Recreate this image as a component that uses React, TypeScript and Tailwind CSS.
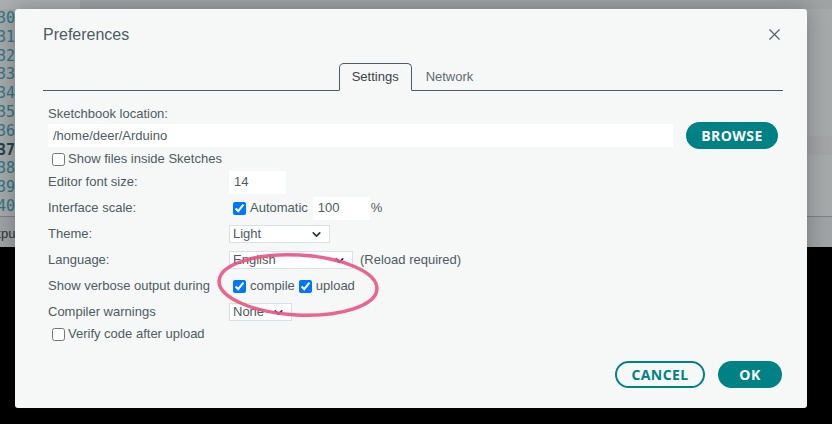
import { ChevronDown, X } from "lucide-react"

const lineNumbers = ["30", "31", "32", "33", "34", "35", "36", "37", "38", "39", "40"]

function Select({ value, width }: { value: string; width: string }) {
  return (
    <div
      className={`${width} h-[18px] flex items-center justify-between bg-white border border-[#dadfe1] pl-[3px] pr-[6px] text-[13px] text-[#4e5b61]`}
    >
      <span>{value}</span>
      <ChevronDown className="h-[13px] w-[13px] text-[#2c353a]" strokeWidth={3.2} />
    </div>
  )
}

function Row({ label, children }: { label: string; children: React.ReactNode }) {
  return (
    <div className="h-[26px] flex items-center">
      <div className="w-[181px] shrink-0">{label}</div>
      <div className="flex items-center">{children}</div>
    </div>
  )
}

export default function App() {
  return (
    <div className="relative w-[832px] h-[424px] overflow-hidden bg-black font-['Liberation_Sans',Arial,sans-serif]">
      {/* dimmed IDE behind the dialog */}
      <div className="h-[247px] flex flex-col bg-[#a6a9aa]">
        <div className="h-[9px] flex">
          <div className="w-[80px] bg-[#adb0b0]" />
          <div className="flex-1 bg-[#9fa3a4]" />
        </div>
        <div className="h-[207px] flex">
          <div className="w-[30px] flex flex-col font-['DejaVu_Sans_Mono',monospace] text-[15px] leading-[18.8px] text-[#2f7487] -ml-[3px]">
            {lineNumbers.map((n) => (
              <div key={n} className={n === "37" ? "font-bold text-[#24424c]" : ""}>
                {n}
              </div>
            ))}
          </div>
          <div className="flex-1 flex flex-col">
            <div className="h-[127px]" />
            <div className="h-[19px] bg-[#a2a4a5]" />
          </div>
        </div>
        <div className="h-[1px] bg-[#7e8284]" />
        <div className="flex-1 bg-[#9fa3a5] pt-[7px] text-[13px] text-[#2c3538]">
          <span className="-ml-[20px] inline-block">Outpu</span>
        </div>
      </div>

      {/* Preferences dialog */}
      <div className="absolute left-[15px] top-[9px] w-[792px] h-[399px] rounded-[3px] bg-[#f6f8f8] shadow-[0_0_22px_rgba(0,0,0,0.28)] flex flex-col text-[13px] text-[#4e5b61]">
        <div className="h-[51px] flex items-center justify-between pl-[28px] pr-[23px]">
          <div className="text-[16px] text-[#4e5b61]">Preferences</div>
          <X className="h-[19px] w-[19px] text-[#4e5b61]" strokeWidth={1.4} />
        </div>

        <div className="mx-[28px] mr-[24px] h-[31px] flex items-end justify-center border-b border-[#4e5b61]">
          <div className="h-[28px] -mb-px px-[12px] flex items-center border border-[#4e5b61] border-b-[#f6f8f8] rounded-t-[5px] bg-[#f6f8f8] text-[#3a4449]">
            Settings
          </div>
          <div className="h-[27px] px-[14px] flex items-center text-[#5f6b71]">Network</div>
        </div>

        <div className="pl-[33px] pr-[29px] flex flex-col">
          <div className="mt-[15px] h-[16px] leading-[16px]">Sketchbook location:</div>
          <div className="h-[27px] flex items-center gap-[13px]">
            <div className="flex-1 h-[23px] bg-white flex items-center pl-[5px]">/home/deer/Arduino</div>
            <div className="w-[92px] h-[27px] rounded-full bg-[#008184] flex items-center justify-center text-white font-['Open_Sans',sans-serif] font-bold text-[14px] tracking-[0.03em]">
              BROWSE
            </div>
          </div>
          <div className="h-[20px] flex items-center">
            <input type="checkbox" className="m-0 ml-[4px] mr-[3px] h-[13px] w-[13px]" readOnly />
            <span>Show files inside Sketches</span>
          </div>

          <Row label="Editor font size:">
            <div className="w-[57px] h-[23px] bg-white flex items-center pl-[5px]">14</div>
          </Row>
          <Row label="Interface scale:">
            <input type="checkbox" className="m-0 ml-[4px] mr-[4px] h-[13px] w-[13px]" defaultChecked />
            <span>Automatic</span>
            <div className="ml-[5px] w-[57px] h-[23px] bg-white flex items-center pl-[5px]">100</div>
            <span className="ml-[1px]">%</span>
          </Row>
          <Row label="Theme:">
            <Select value="Light" width="w-[101px]" />
          </Row>
          <Row label="Language:">
            <Select value="English" width="w-[124px]" />
            <span className="ml-[7px]">(Reload required)</span>
          </Row>
          <Row label="Show verbose output during">
            <input type="checkbox" className="m-0 ml-[4px] mr-[4px] h-[13px] w-[13px]" defaultChecked />
            <span>compile</span>
            <input type="checkbox" className="m-0 ml-[4px] mr-[4px] h-[13px] w-[13px]" defaultChecked />
            <span>upload</span>
          </Row>
          <Row label="Compiler warnings">
            <Select value="None" width="w-[63px]" />
          </Row>
          <div className="h-[18px] flex items-center">
            <input type="checkbox" className="m-0 ml-[4px] mr-[3px] h-[13px] w-[13px]" readOnly />
            <span>Verify code after upload</span>
          </div>
        </div>

        <div className="mt-auto pb-[20px] pr-[25px] flex justify-end gap-[13px] font-['Open_Sans',sans-serif] font-bold text-[14px] tracking-[0.03em]">
          <div className="w-[90px] h-[27px] rounded-full border-2 border-[#008184] text-[#008184] flex items-center justify-center">
            CANCEL
          </div>
          <div className="w-[64px] h-[27px] rounded-full bg-[#008184] text-white flex items-center justify-center">
            OK
          </div>
        </div>
      </div>

      {/* pink annotation ring */}
      <svg className="absolute left-0 top-0 pointer-events-none" width="832" height="424">
        <ellipse
          cx="298"
          cy="285"
          rx="79"
          ry="30"
          transform="rotate(3 298 285)"
          fill="none"
          stroke="#eb5281"
          strokeWidth="3.5"
          opacity="0.9"
        />
      </svg>
    </div>
  )
}
